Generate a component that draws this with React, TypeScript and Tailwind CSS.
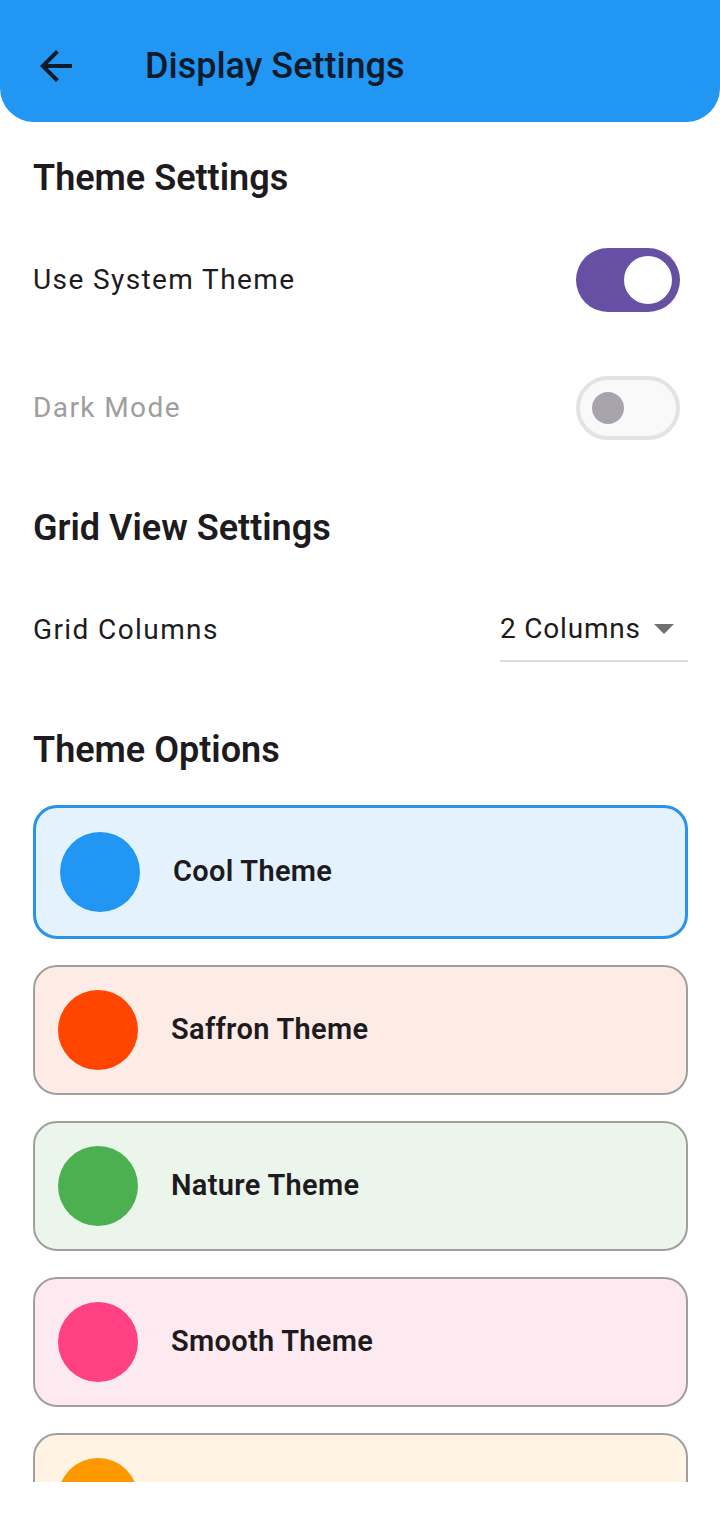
import React from "react";

function BackArrow() {
  return (
    <svg width="48" height="48" viewBox="0 0 24 24" fill="#0f1b2b">
      <path d="M20 11H7.83l5.59-5.59L12 4l-8 8 8 8 1.41-1.41L7.83 13H20v-2z" />
    </svg>
  );
}

function SwitchOn() {
  return (
    <div className="w-[104px] h-[64px] rounded-full bg-[#6750a4] flex items-center justify-end pr-[8px]">
      <div className="w-[48px] h-[48px] rounded-full bg-white" />
    </div>
  );
}

function SwitchOff() {
  return (
    <div className="w-[104px] h-[64px] rounded-full bg-[#f9f9f9] border-4 border-[#e3e3e3] flex items-center pl-[12px]">
      <div className="w-[32px] h-[32px] rounded-full bg-[#a8a2ab]" />
    </div>
  );
}

type Theme = { name: string; bg: string; dot: string; selected?: boolean };

function ThemeCard({ t }: { t: Theme }) {
  return (
    <div
      className={
        t.selected
          ? "h-[134px] rounded-[24px] border-[3px] border-[#2a93e8] bg-[#e3f2fd] flex items-center pl-[24px] gap-[33px] shrink-0"
          : "h-[130px] rounded-[24px] border-2 border-[#a39e9e] flex items-center pl-[23px] gap-[33px] shrink-0"
      }
      style={t.selected ? undefined : { backgroundColor: t.bg }}
    >
      <div className="w-[80px] h-[80px] rounded-full shrink-0" style={{ backgroundColor: t.dot }} />
      {t.name ? (
        <span className="text-[29px] font-semibold text-[#1d1b20] tracking-[0.3px]">{t.name}</span>
      ) : null}
    </div>
  );
}

const themes: Theme[] = [
  { name: "Cool Theme", bg: "#e3f2fd", dot: "#2196f3", selected: true },
  { name: "Saffron Theme", bg: "#fdebe5", dot: "#ff4500" },
  { name: "Nature Theme", bg: "#ebf5ec", dot: "#4caf50" },
  { name: "Smooth Theme", bg: "#fdeaf1", dot: "#ff4081" },
  { name: "", bg: "#fff3e3", dot: "#ff9800" },
];

export default function App() {
  return (
    <div className="w-[720px] h-[1513px] bg-white flex flex-col overflow-hidden font-['Roboto',sans-serif]">
      <header className="h-[122px] shrink-0 bg-[#2196f3] rounded-b-[34px] flex items-center pt-[10px] pl-[32px]">
        <BackArrow />
        <h1 className="ml-[65px] text-[36px] font-medium text-[#0f1b2b]">Display Settings</h1>
      </header>
      <main className="h-[1360px] shrink-0 overflow-hidden flex flex-col pl-[33px] pr-[32px] pt-[36px]">
        <h2 className="h-[40px] leading-[40px] text-[36px] font-semibold text-[#1d1b20]">Theme Settings</h2>
        <div className="mt-[50px] h-[64px] flex items-center justify-between pr-[8px]">
          <span className="text-[28px] text-[#1d1b20] tracking-[1.4px]">Use System Theme</span>
          <SwitchOn />
        </div>
        <div className="mt-[64px] h-[64px] flex items-center justify-between pr-[8px]">
          <span className="text-[28px] text-[#9e9e9e] tracking-[1.4px]">Dark Mode</span>
          <SwitchOff />
        </div>
        <h2 className="mt-[68px] h-[40px] leading-[40px] text-[36px] font-semibold text-[#1d1b20]">Grid View Settings</h2>
        <div className="mt-[50px] h-[64px] flex items-center justify-between">
          <span className="text-[28px] text-[#1d1b20] tracking-[1.4px]">Grid Columns</span>
          <div className="w-[188px] h-[64px] shrink-0 border-b-2 border-[#dcdcdc] flex items-center justify-between">
            <span className="text-[28px] text-[#1d1b20] tracking-[0.8px] whitespace-nowrap">2 Columns</span>
            <svg width="20" height="10" viewBox="0 0 10 5" fill="#707070" className="mr-[14px] shrink-0">
              <path d="M0 0l5 5 5-5z" />
            </svg>
          </div>
        </div>
        <h2 className="mt-[68px] h-[40px] leading-[40px] text-[36px] font-semibold text-[#1d1b20]">Theme Options</h2>
        <div className="mt-[35px] flex flex-col gap-[26px]">
          {themes.map((t, i) => (
            <ThemeCard key={i} t={t} />
          ))}
        </div>
      </main>
    </div>
  );
}
